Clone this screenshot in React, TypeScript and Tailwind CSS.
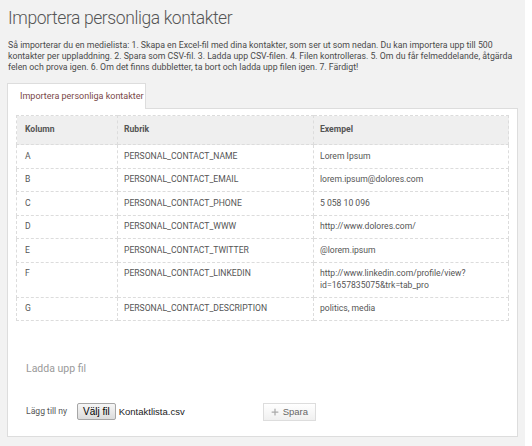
import { Plus } from "lucide-react";

const rows: { col: string; title: string; example: string[] }[] = [
  { col: "A", title: "PERSONAL_CONTACT_NAME", example: ["Lorem Ipsum"] },
  { col: "B", title: "PERSONAL_CONTACT_EMAIL", example: ["lorem.ipsum@dolores.com"] },
  { col: "C", title: "PERSONAL_CONTACT_PHONE", example: ["5 058 10 096"] },
  { col: "D", title: "PERSONAL_CONTACT_WWW", example: ["http://www.dolores.com/"] },
  { col: "E", title: "PERSONAL_CONTACT_TWITTER", example: ["@lorem.ipsum"] },
  {
    col: "F",
    title: "PERSONAL_CONTACT_LINKEDIN",
    example: ["http://www.linkedin.com/profile/view?", "id=1657835075&trk=tab_pro"],
  },
  { col: "G", title: "PERSONAL_CONTACT_DESCRIPTION", example: ["politics, media"] },
];

const border = "border border-dashed border-[#dcdcdc]";

export default function App() {
  return (
    <div className="h-[446px] w-[532px] bg-white">
      <div className="h-full w-[525px] bg-[#f2f2f2] px-[7px] pt-[6px] font-['Roboto',sans-serif] text-[#555]">
        <h1 className="pl-px text-[17.5px] font-light leading-[24px] tracking-[-0.4px] text-[#555]">
          Importera personliga kontakter
        </h1>
        <p className="mt-[10px] pl-px text-[8.75px] leading-[11px] text-[#4a4a4a]">
          Så importerar du en medielista: 1. Skapa en Excel-fil med dina kontakter, som ser ut som nedan. Du kan
          importera upp till 500 kontakter per uppladdning. 2. Spara som CSV-fil. 3. Ladda upp CSV-filen. 4. Filen
          kontrolleras. 5. Om du får felmeddelande, åtgärda felen och prova igen. 6. Om det finns dubbletter, ta bort
          och ladda upp filen igen. 7. Färdigt!
        </p>

        <div className="mt-[10px] flex">
          <div className="relative -mb-px flex h-[26px] w-[139px] items-center whitespace-nowrap border border-b-0 border-[#ddd] bg-white pl-[12px] text-[9px] text-[#7a4848]">
            Importera personliga kontakter
          </div>
        </div>
        <div className="h-[329px] w-[511px] border border-[#ddd] bg-white px-[8px] pt-[6px]">
          <table className="w-[493px] border-collapse text-[8.6px] leading-[11.5px]">
            <thead>
              <tr className="h-[29px] bg-[#efefef] text-left align-middle">
                <th className={`${border} w-[101px] pl-[8px] font-bold`}>Kolumn</th>
                <th className={`${border} w-[196px] pl-[6px] font-bold`}>Rubrik</th>
                <th className={`${border} pl-[6px] font-bold`}>Exempel</th>
              </tr>
            </thead>
            <tbody>
              {rows.map((r) => (
                <tr key={r.col} className="align-top">
                  <td className={`${border} py-[5.5px] pl-[8px]`}>{r.col}</td>
                  <td className={`${border} py-[5.5px] pl-[6px]`}>{r.title}</td>
                  <td className={`${border} py-[5.5px] pl-[6px]`}>
                    {r.example.map((line) => (
                      <div key={line}>{line}</div>
                    ))}
                  </td>
                </tr>
              ))}
            </tbody>
          </table>

          <div className="mt-[40px] pl-[10px] text-[10.5px] text-[#9a9a9a]">Ladda upp fil</div>

          <div className="mt-[26px] flex items-center pl-[10px]">
            <span className="w-[51px] text-[8.6px] text-[#555]">Lägg till ny</span>
            <button className="h-[17px] rounded-[2px] border border-[#a6a6a6] bg-gradient-to-b from-[#f6f6f6] to-[#dcdcdc] px-[5px] font-['Liberation_Sans',sans-serif] text-[10px] leading-none text-black">
              Välj fil
            </button>
            <span className="ml-[3px] font-['Liberation_Sans',sans-serif] text-[9.5px] text-[#222]">
              Kontaktlista.csv
            </span>
            <button className="ml-[78px] flex h-[18px] w-[53px] items-center gap-[3px] border border-[#ddd] bg-gradient-to-b from-white to-[#f0f0f0] pl-[6px] font-['Liberation_Sans',sans-serif] text-[9.5px] text-[#666]">
              <Plus className="h-[10px] w-[10px] text-[#aaa]" strokeWidth={3} />
              Spara
            </button>
          </div>
        </div>
      </div>
    </div>
  );
}
